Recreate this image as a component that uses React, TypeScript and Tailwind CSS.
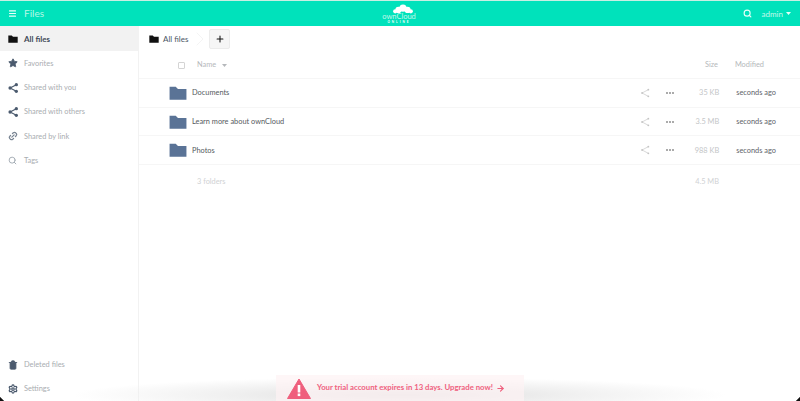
import React from 'react';
import { Search, Star, Link2, Trash2, Settings, Plus, Menu, ArrowRight, ChevronRight } from 'lucide-react';

const FolderIcon = ({ size, color }: { size: number; color: string }) => (
    <svg width={size} height={size} viewBox="0 0 16 16" fill={color}>
        <path d="M0.5 2.5h5.5l2 2h7.5v9.5h-15z" />
    </svg>
);

const Caret = ({ color }: { color: string }) => (
    <svg width="5" height="3" viewBox="0 0 7 4" fill={color}>
        <path d="M0 0h7L3.5 4z" />
    </svg>
);

// share glyph: line weight and dot size differ between the sidebar and the rows
const ShareIcon = ({ size, color, dot, line }: { size: number; color: string; dot: number; line: number }) => (
    <svg width={size} height={size} viewBox="0 0 12 12" fill={color} stroke={color}>
        <path d="M10 2 2.5 6 10 10" fill="none" strokeWidth={line} />
        <circle cx="10" cy="2" r={dot} stroke="none" />
        <circle cx="2.5" cy="6" r={dot} stroke="none" />
        <circle cx="10" cy="10" r={dot} stroke="none" />
    </svg>
);

const navItems = [
    { label: 'Favorites', icon: <Star size={10} fill="#4b5a6e" stroke="#4b5a6e" /> },
    { label: 'Shared with you', icon: <ShareIcon size={10} color="#4b5a6e" dot={2} line={1.4} /> },
    { label: 'Shared with others', icon: <ShareIcon size={10} color="#4b5a6e" dot={2} line={1.4} /> },
    { label: 'Shared by link', icon: <Link2 size={10} stroke="#7a8694" strokeWidth={3} className="-rotate-45" /> },
    { label: 'Tags', icon: <Search size={9} stroke="#a5adb5" strokeWidth={2.6} /> },
];

const files = [
    { name: 'Documents', size: '35 KB' },
    { name: 'Learn more about ownCloud', size: '3.5 MB' },
    { name: 'Photos', size: '988 KB' },
];

export default function App() {
    return (
        <div className="relative flex h-[401px] w-[800px] flex-col overflow-hidden bg-white font-['Lato',sans-serif] text-[7.4px]">
            <header className="relative flex h-[26px] shrink-0 items-center justify-between border-t border-[#c8efe3] bg-[#00e2bb] pl-2 pr-[9px] text-white">
                <div className="flex items-center gap-[7px]">
                    <Menu size={9} strokeWidth={3} color="#eafff9" />
                    <span className="text-[10px] text-[#b8f7e6]">Files</span>
                </div>
                <div className="flex items-center gap-[10px]">
                    <Search size={9} strokeWidth={3} color="#e6fff8" />
                    <div className="flex items-center gap-[3px] text-[#c4f9ea]">
                        <span className="text-[8px]">admin</span>
                        <Caret color="#e6fff8" />
                    </div>
                </div>
                <div className="absolute left-[382px] top-[3px] flex w-[34px] flex-col items-center">
                    <svg width="20" height="10" viewBox="0 0 22 10" fill="#fff" className="ml-[8px]">
                        <circle cx="11" cy="4" r="4" />
                        <circle cx="6" cy="6" r="3.4" />
                        <circle cx="16" cy="6" r="3.4" />
                        <circle cx="2.4" cy="7.6" r="2.3" />
                        <circle cx="19.6" cy="7.6" r="2.3" />
                    </svg>
                    <span className="-mt-[1px] text-[7.5px] leading-[7px] text-[#c0f8e9]">ownCloud</span>
                    <span className="mt-[1px] text-[3px] font-bold leading-[3px] tracking-[2px] text-white">ONLINE</span>
                </div>
            </header>
            <div className="flex min-h-0 flex-1">
                <aside className="flex w-[139px] shrink-0 flex-col justify-between border-r border-[#f2f2f2]">
                    <nav className="flex flex-col">
                        <div className="flex h-[25px] items-center bg-[#f2f2f2] pl-2">
                            <span className="flex w-[16px] items-center">
                                <FolderIcon size={10} color="#111111" />
                            </span>
                            <span className="text-[8px] font-bold text-[#3f4a58]">All files</span>
                        </div>
                        {navItems.map((item) => (
                            <div key={item.label} className="flex h-[24.4px] items-center pl-2 text-[#a9adb1]">
                                <span className="flex w-[16px] items-center">{item.icon}</span>
                                <span>{item.label}</span>
                            </div>
                        ))}
                    </nav>
                    <div className="flex flex-col">
                        <div className="flex h-[24px] items-center pl-2 text-[#a9adb1]">
                            <span className="flex w-[16px] items-center">
                                <Trash2 size={10} stroke="#4b5a6e" fill="#4b5a6e" />
                            </span>
                            <span>Deleted files</span>
                        </div>
                        <div className="flex h-[24px] items-center pl-2 text-[#a9adb1]">
                            <span className="flex w-[16px] items-center">
                                <Settings size={10} stroke="#4b5a6e" strokeWidth={3} />
                            </span>
                            <span>Settings</span>
                        </div>
                    </div>
                </aside>
                <main className="flex min-w-0 flex-1 flex-col">
                    <div className="flex h-[26px] items-center pl-[10px]">
                        <FolderIcon size={10} color="#111111" />
                        <span className="ml-[4px] text-[8px] text-[#4a5563]">All files</span>
                        <ChevronRight size={24} strokeWidth={0.5} color="#e8e8e8" className="-mr-[3px]" />
                        <button className="flex h-[20px] w-[21px] items-center justify-center rounded-[2px] border border-[#ececec] bg-[#f6f6f6]">
                            <Plus size={10} strokeWidth={2.5} color="#111111" />
                        </button>
                    </div>
                    <div className="flex h-[27px] items-center border-b border-[#f6f6f6] pl-[39px] pr-[36px] text-[#b5b8bb]">
                        <span className="h-[7px] w-[7px] rounded-[1px] border border-[#d4d4d4]" />
                        <span className="ml-[12px]">Name</span>
                        <span className="ml-[6px]"><Caret color="#b5b8bb" /></span>
                        <span className="ml-auto">Size</span>
                        <span className="ml-[17px]">Modified</span>
                    </div>
                    {files.map((file) => (
                        <div key={file.name} className="flex h-[28.7px] items-center border-b border-[#f6f6f6] pl-[30px] pr-[24px]">
                            <FolderIcon size={18} color="#5a7396" />
                            <span className="ml-[5px] text-[#555a60]">{file.name}</span>
                            <span className="ml-auto">
                                <ShareIcon size={10} color="#c4c4c4" dot={1.1} line={0.8} />
                            </span>
                            <span className="ml-[16px] flex w-[8px] justify-between">
                                <span className="h-[2px] w-[2px] rounded-full bg-[#8f8f8f]" />
                                <span className="h-[2px] w-[2px] rounded-full bg-[#8f8f8f]" />
                                <span className="h-[2px] w-[2px] rounded-full bg-[#8f8f8f]" />
                            </span>
                            <span className="w-[45px] text-right text-[#c4c6c8]">{file.size}</span>
                            <span className="ml-[17px] text-[#5e6369]">seconds ago</span>
                        </div>
                    ))}
                    <div className="flex h-[32px] items-center pl-[58px] pr-[81px] text-[#d0d2d4]">
                        <span>3 folders</span>
                        <span className="ml-auto">4.5 MB</span>
                    </div>
                </main>
            </div>
            {/* screenshot drop shadow at the bottom edge */}
            <div className="pointer-events-none absolute bottom-[-12px] left-[70px] right-[70px] h-[36px] bg-[radial-gradient(ellipse_at_center,#dcdcdc_0%,#efefef_35%,transparent_70%)]" />
            <div className="absolute bottom-0 left-0 h-[5px] w-[5px] bg-[linear-gradient(45deg,#111111_35%,transparent_50%)]" />
            <div className="absolute bottom-0 right-0 h-[5px] w-[5px] bg-[linear-gradient(-45deg,#111111_35%,transparent_50%)]" />
            <div className="absolute bottom-0 left-[276px] flex h-[26px] w-[248px] items-center whitespace-nowrap bg-[#fdf2f3]/70 pl-[11px]">
                <svg width="24" height="21" viewBox="0 0 24 21">
                    <path d="M12 1 L23.5 20.5 H0.5 Z" fill="#ef5f7d" stroke="#ef5f7d" strokeLinejoin="round" />
                    <rect x="10.7" y="7" width="2.6" height="7.5" fill="#fff" />
                    <rect x="10.7" y="15.5" width="2.6" height="2.6" fill="#fff" />
                </svg>
                <span className="ml-[6px] text-[7.75px] font-bold text-[#f0617f]">Your trial account expires in 13 days. Upgrade now!</span>
                <ArrowRight size={9} strokeWidth={3} color="#ef5f7d" className="ml-[3px]" />
            </div>
        </div>
    );
}
